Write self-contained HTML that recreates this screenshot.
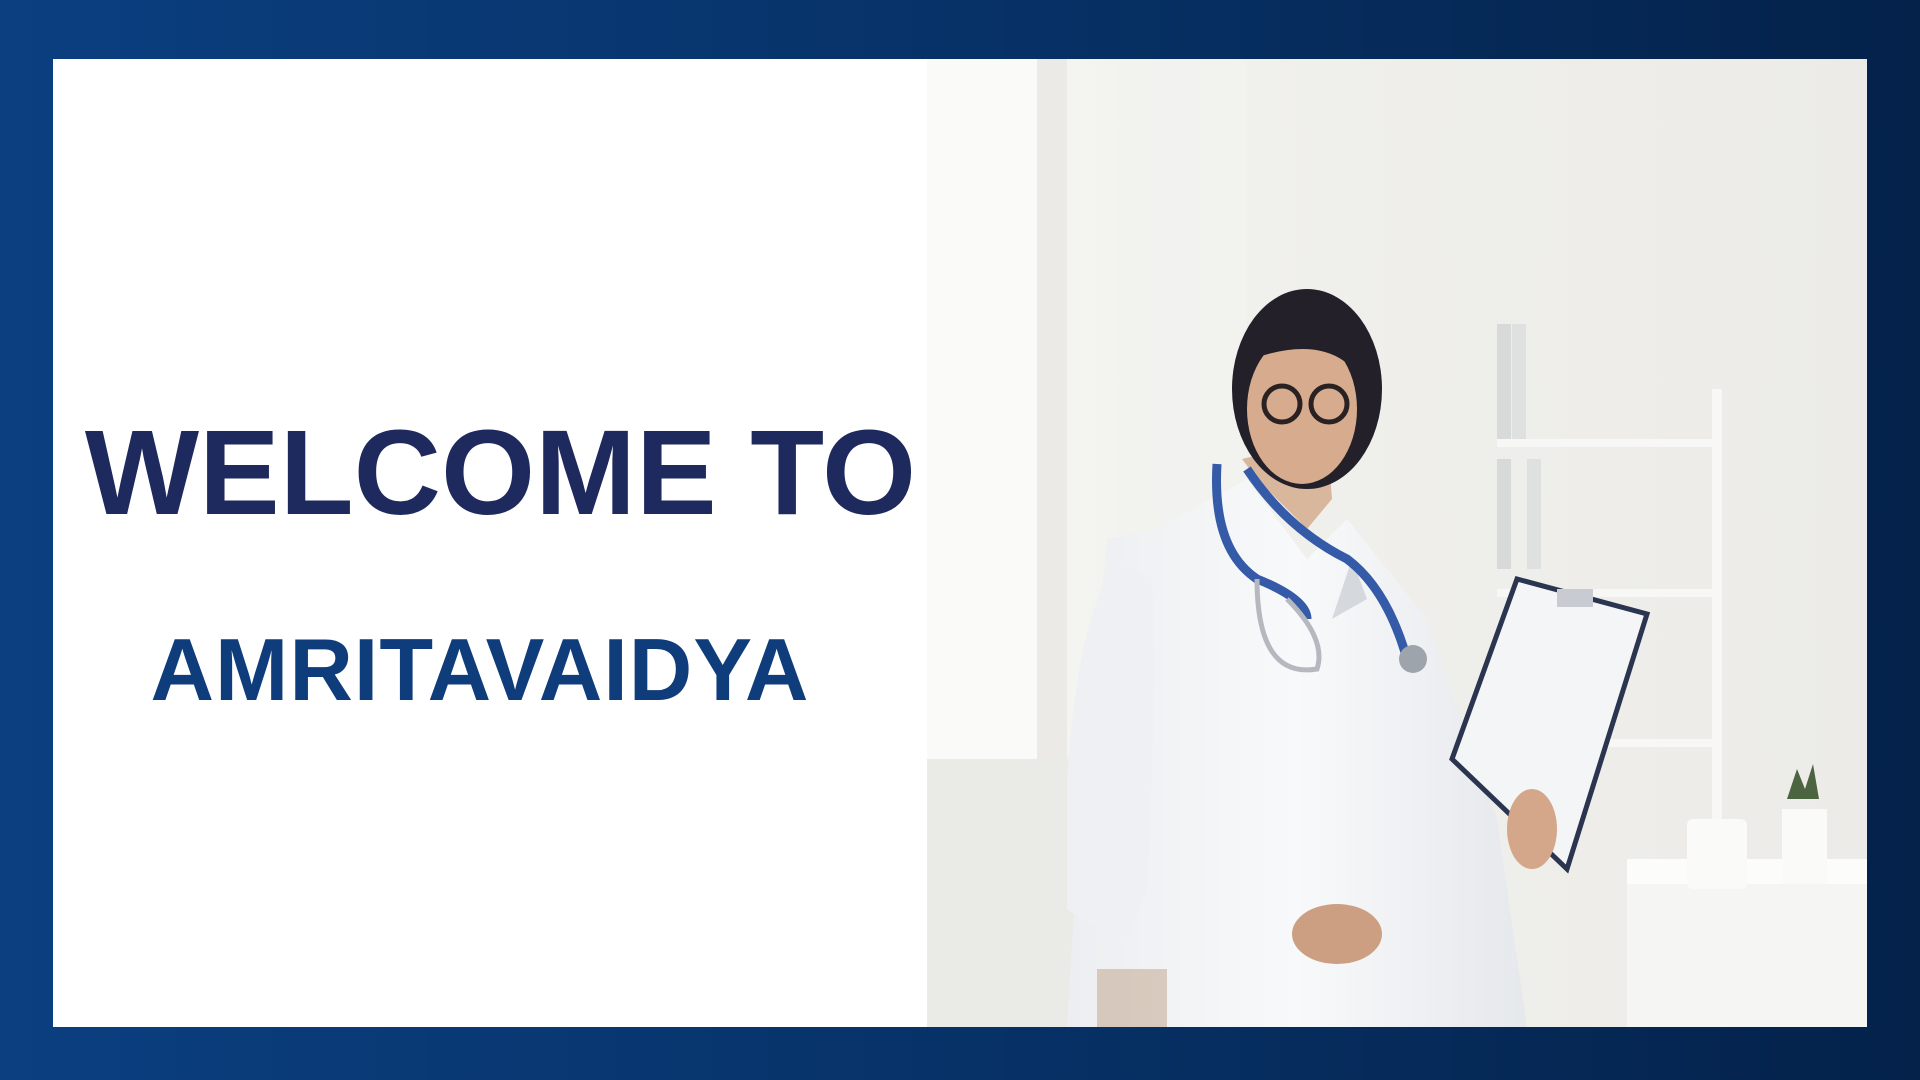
<!DOCTYPE html>
<html><head><meta charset="utf-8"><style>
html,body{margin:0;padding:0;width:1920px;height:1080px;overflow:hidden}
body{background:linear-gradient(90deg,#0b3f80 0%,#073268 50%,#04224a 100%);position:relative;font-family:"Liberation Sans",sans-serif}
.white{position:absolute;left:53px;top:59px;width:874px;height:968px;background:#fff}
.photo{position:absolute;left:927px;top:59px;width:940px;height:968px;overflow:hidden;background:#f0f0ed}
.t1{position:absolute;left:83px;top:412px;width:835px;text-align:center;font-weight:700;font-size:121px;color:#1e2a5e;line-height:1}
.t2{position:absolute;left:140px;top:626px;width:680px;text-align:center;font-weight:700;font-size:88px;letter-spacing:1px;color:#0f3d7c;line-height:1}
</style></head><body>
<div class="white"></div>
<div class="t1">WELCOME TO</div>
<div class="t2">AMRITAVAIDYA</div>
<div class="photo">
<svg width="940" height="968" viewBox="0 0 940 968">
<defs>
<linearGradient id="bg" x1="0" x2="1"><stop offset="0" stop-color="#f8f8f6"/><stop offset="0.3" stop-color="#f0f0ec"/><stop offset="1" stop-color="#ecebe7"/></linearGradient>
<linearGradient id="coat" x1="0" x2="1"><stop offset="0" stop-color="#eceef1"/><stop offset="0.5" stop-color="#f8f9fa"/><stop offset="1" stop-color="#e5e8ec"/></linearGradient>
</defs>
<rect width="940" height="968" fill="url(#bg)"/>
<rect x="0" y="0" width="110" height="700" fill="#fafaf9"/>
<rect x="110" y="0" width="30" height="720" fill="#ebeae6"/>
<rect x="0" y="700" width="180" height="268" fill="#eaeae6"/>
<rect x="230" y="0" width="90" height="968" fill="#f4f4f1" opacity=".6"/>
<rect x="570" y="265" width="14" height="120" fill="#d8d9d9"/>
<rect x="585" y="265" width="14" height="120" fill="#dfe0e0"/>
<rect x="570" y="400" width="14" height="110" fill="#d8d9d9"/>
<rect x="600" y="400" width="14" height="110" fill="#dfe0e0"/>
<rect x="570" y="380" width="220" height="8" fill="#f7f7f5"/>
<rect x="570" y="530" width="220" height="8" fill="#f7f7f5"/>
<rect x="570" y="680" width="220" height="8" fill="#f7f7f5"/>
<rect x="785" y="330" width="10" height="500" fill="#f7f7f5"/>
<rect x="700" y="820" width="240" height="148" fill="#f5f5f3"/>
<rect x="700" y="800" width="240" height="25" fill="#fcfcfb"/>
<rect x="760" y="760" width="60" height="70" rx="6" fill="#fafaf8"/>
<rect x="855" y="750" width="45" height="75" fill="#fafaf8"/>
<path d="M860 740 l10 -30 l8 20 l8 -25 l6 35z" fill="#4d6440"/>
<path d="M140 968 L150 800 L180 480 L230 470 L320 420 L380 500 L420 460 L500 560 L570 760 L600 968Z" fill="url(#coat)"/>
<path d="M140 720 Q150 560 190 500 L225 520 Q230 640 220 830 L200 880 Q170 870 140 850Z" fill="#eef0f3"/>
<path d="M405 560 L425 500 L440 540 Z" fill="#d5d9de"/>
<path d="M315 400 L330 420 L380 470 L405 440 L400 380 Z" fill="#d9b79c"/>
<ellipse cx="380" cy="330" rx="75" ry="100" fill="#23202a"/>
<ellipse cx="375" cy="350" rx="55" ry="75" fill="#d7ab8e"/>
<path d="M315 300 Q340 240 430 270 L440 330 Q410 270 325 300 Z" fill="#23202a"/>
<circle cx="355" cy="345" r="18" fill="none" stroke="#2a2222" stroke-width="5"/>
<circle cx="402" cy="345" r="18" fill="none" stroke="#2a2222" stroke-width="5"/>
<path d="M290 405 Q285 490 330 520 Q380 540 380 560 M320 410 Q360 470 420 500 Q460 530 480 600" fill="none" stroke="#345aa8" stroke-width="9"/>
<path d="M330 520 Q330 620 390 610 Q400 580 360 540" fill="none" stroke="#b5b9bf" stroke-width="5"/>
<circle cx="486" cy="600" r="14" fill="#9ea4ab"/>
<path d="M525 700 L590 520 L720 555 L640 810 Z" fill="#f4f5f7" stroke="#2b3550" stroke-width="5"/>
<rect x="630" y="530" width="36" height="18" fill="#c8ccd2"/>
<ellipse cx="605" cy="770" rx="25" ry="40" fill="#d4a78b"/>
<ellipse cx="410" cy="875" rx="45" ry="30" fill="#cd9f82"/>
<rect x="170" y="910" width="70" height="58" fill="#b58c6c" opacity=".4"/>
</svg>
</div>
</body></html>
